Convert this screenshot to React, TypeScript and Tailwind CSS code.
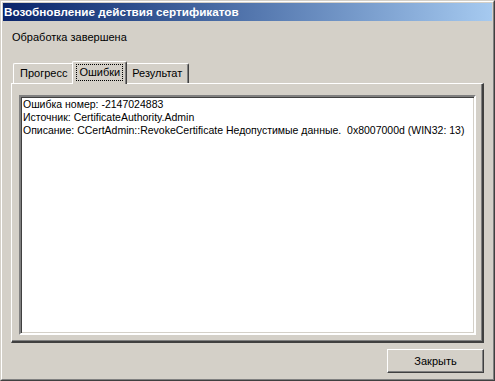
import React from "react";

export default function App() {
  return (
    <div className="w-[495px] h-[381px] box-border bg-[#d4d0c8] border border-[#d4d0c8] border-r-[#404040] border-b-[#404040] font-['Liberation_Sans',Arial,sans-serif] text-[11px] text-black">
      <div className="h-full box-border border border-white border-r-[#808080] border-b-[#808080] p-px flex flex-col">
        <div className="h-[18px] shrink-0 bg-gradient-to-r from-[#0a246a] to-[#a6caf0] flex items-center pl-[1px]">
          <span className="text-white font-bold text-[11.7px] leading-[18px] whitespace-nowrap">
            Возобновление действия сертификатов
          </span>
        </div>
        <div className="flex-1 flex flex-col px-[8px]">
          <div className="pl-[1px] pt-[10px] leading-[13px] h-[40px]">Обработка завершена</div>
          <div className="flex items-end h-[22px] pl-[2px] relative z-10">
            <div className="h-[20px] box-border border-l border-t border-white border-r border-r-[#404040] rounded-tl-[2px] rounded-tr-[2px] shadow-[inset_-1px_0_0_#808080] px-[6px] leading-[18px] mb-0">
              Прогресс
            </div>
            <div className="h-[23px] -mb-[1px] -ml-[2px] box-border border-l border-t border-white border-r border-r-[#404040] rounded-tl-[2px] rounded-tr-[2px] shadow-[inset_-1px_0_0_#808080] bg-[#d4d0c8] px-[4px] pt-[2px] relative">
              <span className="inline-block outline-1 outline-dotted outline-black px-[2px] leading-[15px]">Ошибки</span>
            </div>
            <div className="h-[20px] -ml-[2px] box-border border-l border-t border-white border-r border-r-[#404040] rounded-tl-[2px] rounded-tr-[2px] shadow-[inset_-1px_0_0_#808080] px-[6px] leading-[18px] relative z-[-1]">
              Результат
            </div>
          </div>
          <div className="h-[260px] box-border border-l border-t border-white border-r-2 border-b-2 border-r-[#404040] border-b-[#404040] shadow-[inset_-1px_-1px_0_#808080] pl-[7px] pr-[5px] pt-[11px]">
            <div className="w-[457px] h-[240px] box-border bg-white border-2 border-t-[#808080] border-l-[#808080] border-r-white border-b-white shadow-[inset_1px_1px_0_#404040,inset_-1px_-1px_0_#d4d0c8] pl-[1px] pt-[1px] text-[10.5px] leading-[13px] whitespace-pre">
              <div className="pl-[1px]">Ошибка номер: -2147024883</div>
              <div className="pl-[1px]">Источник: CertificateAuthority.Admin</div>
              <div className="pl-[1px]">Описание: CCertAdmin::RevokeCertificate Недопустимые данные.  0x8007000d (WIN32: 13)</div>
            </div>
          </div>
          <div className="flex justify-end pt-[6px]">
            <button className="w-[97px] h-[24px] box-border bg-[#d4d0c8] border border-white border-r-[#404040] border-b-[#404040] shadow-[inset_-1px_-1px_0_#808080] text-[11px] leading-[20px]">
              Закрыть
            </button>
          </div>
        </div>
      </div>
    </div>
  );
}
